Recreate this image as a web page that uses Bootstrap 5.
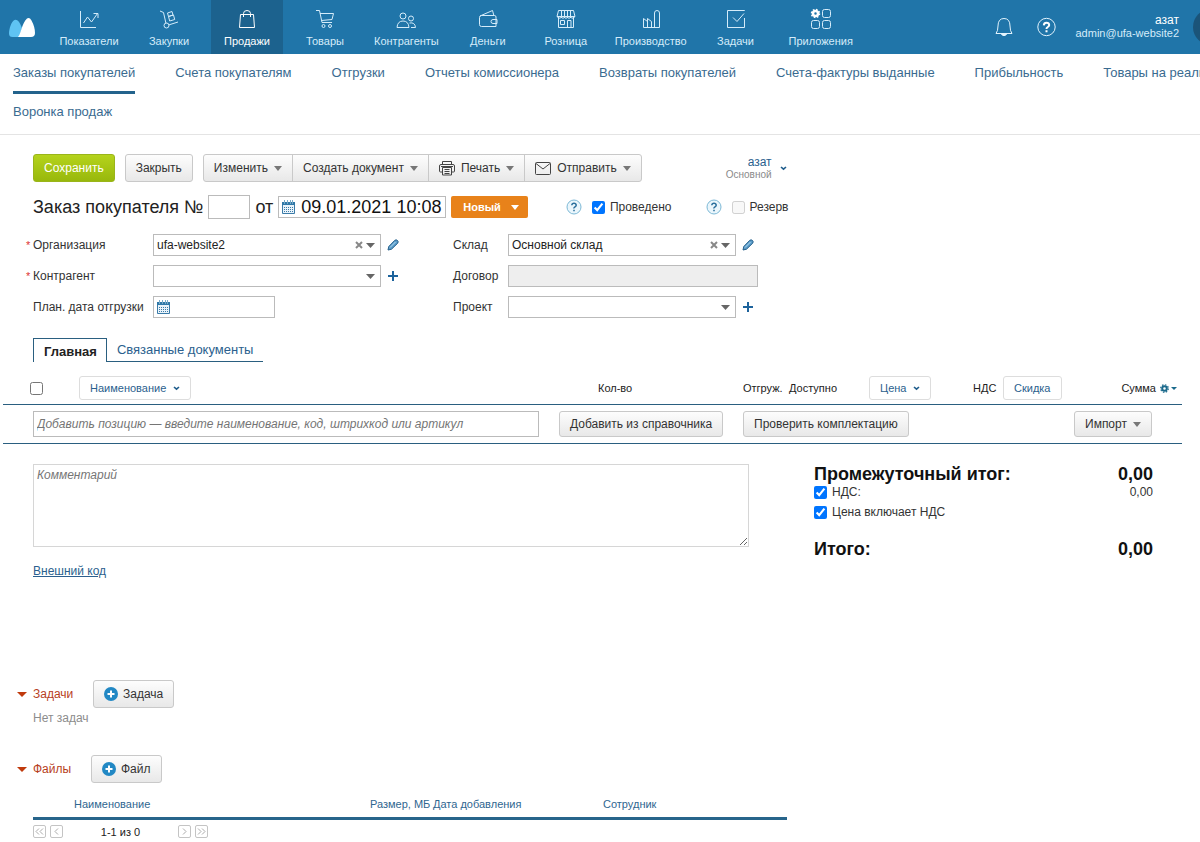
<!DOCTYPE html>
<html lang="ru">
<head>
<meta charset="utf-8">
<meta name="viewport" content="width=device-width, initial-scale=1">
<title>Заказ покупателя</title>
<link href="https://cdn.jsdelivr.net/npm/bootstrap@5.3.0/dist/css/bootstrap.min.css" rel="stylesheet">
<style>
:root{--ms-blue:#2075a9;--ms-link:#2b5f8e;--ms-line:#2a5f80}
body{font-family:"Liberation Sans",Arial,sans-serif;font-size:12px;line-height:16px;color:#222;background:#fff;overflow-x:hidden}
a{color:var(--ms-link);text-decoration:none}
label{white-space:nowrap}
input[type=checkbox]{width:13px;height:13px;margin:0;flex:none}
svg{flex:none;display:block}
/* top bar */
.topbar{background:var(--ms-blue);height:54px;overflow:hidden;padding-left:9px}
.brand{width:42px}
.mods{gap:6px}
.mod{min-width:72px;padding:8px 7px 0;color:#d5ecfa;font-size:11px;line-height:14px;gap:4px;white-space:nowrap}
.mod:first-child{min-width:76px}
.mod svg{fill:none;stroke:currentColor;stroke-width:1;height:22px;width:22px}
.mod.active{background:#1c628e;color:#fff}
.acct{color:#d5ecfa;font-size:11px;line-height:13px}
.acct strong{color:#fff;font-size:12px;font-weight:normal}
.avatar{width:36px;height:36px;border-radius:50%;background:#1b5479;margin-right:-29px;margin-left:14px}
.iconbtn{border:0;background:none;padding:0;color:#e2f3fd}
/* section links */
.sections{border-bottom:1px solid #e4e4e4;padding:1px 0 1px 13px;font-size:13px;overflow:hidden;white-space:nowrap}
.sections .line{gap:40px}
.sections a{line-height:36px;border-bottom:3px solid transparent;color:#3a6b90}
.sections a.active{border-color:#23638c}
/* controls */
.gbtn{--bs-btn-border-radius:3px;height:28px;padding:0 10px;font-size:12px;line-height:16px;border:1px solid #c9c9c9;background:linear-gradient(#fdfdfd,#e8e8e8);color:#333;display:inline-flex;align-items:center;white-space:nowrap;gap:6px}
.gbtn.low{height:26px}
.gbtn.save{background:linear-gradient(#b5d31c,#98b80c);border-color:#9ab51a;color:#fff}
.tri{width:0;height:0;border:4px solid transparent;border-top:5px solid #777;border-bottom:0}
.wbtn{height:24px;border:1px solid #ddd;border-radius:3px;background:#fff;color:var(--ms-link);font-size:11px;padding:0 10px;display:inline-flex;align-items:center;gap:7px}
.field{border:1px solid #bbb;height:22px;background:#fff;padding:0 3px;font-size:12px;color:#222;border-radius:0}
::placeholder{color:#757575;opacity:1;font-style:italic}
/* document head */
.doc{padding:19px 0 0 33px}
.tools{gap:10px}
.userpick{margin-left:74px;gap:8px}
.userpick .dept{font-size:10px;line-height:12px;color:#8a8a8a}
.userpick .who{line-height:13px}
.titlerow{font-size:18px;line-height:24px;margin-top:13px;color:#222;gap:5px}
.numbox{width:42px}
.titlerow .numbox{height:24px}
.titlerow .field{font-size:18px}
.datebox{display:flex;align-items:center;gap:5px;width:122px}
.titlerow .datebox{width:168px;gap:6px}
.datebox input{border:0;padding:0;outline:0;width:100%;background:none;color:#111}
.status{height:22px;background:#e8821a;color:#fff;border:0;border-radius:2px;font-size:11px;font-weight:bold;padding:0 9px 0 12px;gap:10px;display:flex;align-items:center}
.status .tri{border-top-color:#fff}
.checks{font-size:12px;line-height:16px;margin-left:33px;gap:5px;color:#333}
.checks svg{margin-right:5px}
.checks.second{margin-left:29px}
.props{display:grid;grid-template-columns:120px 300px 55px 300px;row-gap:9px;margin-top:15px;align-items:center}
.props label{position:relative;color:#333}
.req::before{content:"*";position:absolute;left:-7px;top:0;color:#d33;font-size:11px}
.combo{position:relative;width:228px}
.combo select{appearance:none;width:100%;display:block;background:#fff url("data:image/svg+xml,%3Csvg xmlns='http://www.w3.org/2000/svg' width='9' height='5'%3E%3Cpath d='M0 0h9L4.500 5z' fill='%23666'/%3E%3C/svg%3E") no-repeat right 5px center}
.contract{width:250px}
.contract:disabled{background:#eee}
.clear{position:absolute;right:18px;top:7px;border:0;background:none;padding:0}
.withact{display:flex;align-items:center;gap:6px}
.linktabs{margin-top:20px;font-size:13px;height:24px;width:230px}
.linktabs a{line-height:22px;padding:1px 9px 0 10px;border-bottom:1px solid var(--ms-line);white-space:nowrap;flex:1}
.linktabs a.active{flex:none;border:1px solid var(--ms-line);border-bottom:0;color:#222;font-weight:bold;line-height:24px}
/* positions */
.goods{margin:13px 18px 0 3px;font-size:11px}
.goods table{table-layout:fixed;width:100%}
.goods th{font-weight:normal;height:29px;padding:1px 0 4px;color:#222;white-space:nowrap;vertical-align:middle}
.goods tr{border-bottom:1px solid var(--ms-line)}
.goods td{height:39px;padding:0}
.goods th.selcol{padding:0 0 3px 27px}
.goods th.qty{padding-left:39px}
.goods td.additem-cell{padding:0 20px 0 30px}
.additem{height:26px}
.sumcol{gap:4px;padding-right:5px}
/* comment and totals */
.totals{padding:20px 47px 0 33px}
.noteside{width:716px}
.note{display:block;width:100%;height:83px;border:1px solid #d6d6d6;padding:2px 3px;font-size:12px;line-height:16px}
.sums{width:339px}
.sumhead{font-size:18px;line-height:20px;font-weight:bold;color:#111}
.sumline{gap:5px;color:#333}
.grand{margin-top:19px}
/* tasks and files */
.extras{padding:101px 0 0 17px}
.blk{color:#b7401d;gap:6px;width:76px}
.blk .tri{border-width:5px;border-top-color:#c03a0d;border-bottom:0}
.addbtn{gap:5px}
.none{padding:2px 0 0 16px;color:#8c8c8c}
.filehead{margin-top:29px}
.filehead .blk{width:74px}
.filelist{padding:11px 0 4px 16px}
.files{width:754px;font-size:11px;table-layout:fixed}
.files th{font-weight:normal;color:#2f6690;height:24px;padding:0 0 3px;white-space:nowrap;border-bottom:3px solid #28658b}
.pager{gap:4px;font-size:11px;margin-top:4px}
.count{width:107px;text-align:center}
.pg{width:13px;height:13px;border:1px solid #c4c4c4;border-radius:2px;background:#fff;padding:0;display:flex;align-items:center;justify-content:center}
.pg svg{stroke:#aaa;fill:none}
</style>
</head>
<body>
<svg class="d-none" aria-hidden="true">
 <symbol id="cal" viewBox="0 0 13 14"><path d="M.5 2.500h12v11H.5z" fill="#e9f3fa" stroke="#3a7ba8"/><path d="M0 2h13v3H0z" fill="#2f78a8"/><path d="M2.500 0v4M5.500 0v4M8.500 0v4M10.500 0v4" stroke="#79abc9"/><path d="M2 7.500h9M2 9.500h9M2 11.500h9" stroke="#3a7ba8" stroke-dasharray="1 1"/></symbol>
 <symbol id="pen" viewBox="0 0 12 12"><path d="M1 11l.8-3.500L7.800 1.300Q9.200.3 10.500 1.500T10.700 4.200L4.500 10.200z" fill="#5b9cc9" stroke="#245f8a"/><path d="M3 8.500l5.500-5.500" stroke="#b4dcf2"/></symbol>
 <symbol id="plus" viewBox="0 0 12 12"><path d="M6 1v10M1 6h10" stroke="#1d639c" stroke-width="2"/></symbol>
 <symbol id="x" viewBox="0 0 8 8"><path d="M1 1l6 6M7 1L1 7" stroke="#888" stroke-width="2"/></symbol>
 <symbol id="chev" viewBox="0 0 7 5"><path d="M1 1l2.500 2.200L6 1" fill="none" stroke="#1f5d8c" stroke-width="1.600"/></symbol>
 <symbol id="help" viewBox="0 0 16 16"><circle cx="8" cy="8" r="7" fill="#eaf6fc" stroke="#7db9d6"/><path d="M5.800 6.300Q6 4.300 8 4.300T10.200 6.200Q10.200 7.200 9 7.900T8 9.500M8 10.700v1.500" fill="none" stroke="#2a6f9c" stroke-width="1.500"/></symbol>
 <symbol id="add" viewBox="0 0 14 14"><circle cx="7" cy="7" r="7" fill="#2288c4"/><path d="M7 3.500v7M3.500 7h7" stroke="#fff" stroke-width="2"/></symbol>
</svg>

<header class="topbar d-flex align-items-stretch">
 <a class="brand d-flex align-items-center" href="#" aria-label="Главная страница"><svg width="27" height="21" viewBox="0 0 27 21"><path d="M5.500 3C2.500 4 0 12 0 16.500Q0 20 3.500 20H10L13 11Q9.500 1.500 5.500 3z" fill="#5fc3f3"/><path d="M9 20C11.500 18 13 6 18 1.500Q20.500 0 22.500 3.500Q26 10 26 16Q26 20 22 20z" fill="#fff"/></svg></a>
 <nav class="mods d-flex">
  <a class="mod d-flex flex-column align-items-center" href="#"><svg viewBox="0 0 22 22"><path d="M2.500 3v16.500H18M5.500 15l4-6 4 5 6-8.500M15.500 5.500H20V10"/></svg>Показатели</a>
  <a class="mod d-flex flex-column align-items-center" href="#"><svg viewBox="0 0 22 22"><path d="M2 3l3.500 1.500L8 15.500M10.500 17l9.500-3M9.500 5l4.500-1.500 1 3.500-4.500 1.500zM10.500 8.500l5-1.500 1.200 4.500-5 1.500z"/><circle cx="8.500" cy="17.500" r="2.500"/></svg>Закупки</a>
  <a class="mod active d-flex flex-column align-items-center" href="#"><svg viewBox="0 0 22 22"><path d="M4.500 6.500h13l1 13h-15zM7.500 9V5.500Q7.500 2.500 11 2.500T14.500 5.500V9"/></svg>Продажи</a>
  <a class="mod d-flex flex-column align-items-center" href="#"><svg viewBox="0 0 22 22"><path d="M2 2.500h3.500L8 14.500h10M6 5.500h13.500l-1.500 6L7.500 12.500"/><circle cx="9.500" cy="18" r="1.500"/><circle cx="16" cy="18" r="1.500"/></svg>Товары</a>
  <a class="mod d-flex flex-column align-items-center" href="#"><svg viewBox="0 0 22 22"><circle cx="8" cy="8" r="3"/><circle cx="16" cy="10.500" r="2.500"/><path d="M2 19.500Q2.500 13 8 13t6 6.500zM14.500 15Q20 14 20.500 19.500H16"/></svg>Контрагенты</a>
  <a class="mod d-flex flex-column align-items-center" href="#"><svg viewBox="0 0 22 22"><path d="M3 8L15.500 2.500 17 8M4.500 7.500h13Q19 7.500 19 9v9.500H4.500Q2.500 18.500 2.500 16.500V9.500Q2.500 7.500 4.500 7.500zM20 11.500h-4q-2 0-2 2t2 2h4z"/></svg>Деньги</a>
  <a class="mod d-flex flex-column align-items-center" href="#"><svg viewBox="0 0 22 22"><path d="M3.500 2.500h15l1.500 6H2zM3.500 8.500v11h15v-11M6.500 3v7M9.500 3v7M12.500 3v7M15.500 3v7M2 8.500q1.500 3 4.500 1 1.500 1.500 3 0 1.500 1.500 3 0 1.500 1.500 3 0 3 2 4.500-1M5.500 12.500h4v4h-4zM12.500 19.500v-7h3.500v7"/></svg>Розница</a>
  <a class="mod d-flex flex-column align-items-center" href="#"><svg viewBox="0 0 22 22"><path d="M3.500 19.500v-9l4 3v-3l4 3v6M3.500 19.500h16V5Q19.500 2.500 17 2.500T14.500 5v14.500M7.500 13v6.500"/></svg>Производство</a>
  <a class="mod d-flex flex-column align-items-center" href="#"><svg viewBox="0 0 22 22"><path d="M19.500 3V2.500h-17v17h17V10M8 9.500l4 4 7-8"/></svg>Задачи</a>
  <a class="mod ms-1 d-flex flex-column align-items-center" href="#"><svg viewBox="0 0 22 22"><rect x="12.500" y="1.500" width="8" height="8" rx="2"/><rect x="1.500" y="12.500" width="8" height="8" rx="2"/><rect x="12.500" y="12.500" width="8" height="8" rx="2"/><circle cx="5.500" cy="5.500" r="2.500" stroke="#fff" stroke-width="2.500"/><circle cx="5.500" cy="5.500" r="4" stroke="#fff" stroke-width="1.500" stroke-dasharray="1.600 1.540"/></svg>Приложения</a>
 </nav>
 <div class="ms-auto d-flex align-items-center">
  <button class="iconbtn" aria-label="Уведомления"><svg width="18" height="20" viewBox="0 0 18 20" fill="none" stroke="currentColor"><path d="M1 16.500Q3 14 3 9 3 1.500 9 1.500T15 9q0 5 2 7.500z"/><path d="M6.500 17.500Q9 20 11.500 17.500z" fill="currentColor"/></svg></button>
  <button class="iconbtn ms-4" aria-label="Помощь"><svg width="19" height="20" viewBox="0 0 19 20"><circle cx="9.500" cy="10" r="8.700" fill="none" stroke="currentColor"/><path d="M6.800 8.300Q7 5.800 9.500 5.800T12.200 8Q12.200 9.200 10.800 10T9.500 12M9.500 13.200v2" fill="none" stroke="#fff" stroke-width="2"/></svg></button>
  <div class="acct d-flex flex-column align-items-end ms-3 ps-1"><strong>азат</strong><span>admin@ufa-website2</span></div>
  <div class="avatar"></div>
 </div>
</header>

<nav class="sections">
 <div class="line d-flex"><a class="active" href="#">Заказы покупателей</a><a href="#">Счета покупателям</a><a href="#">Отгрузки</a><a href="#">Отчеты комиссионера</a><a href="#">Возвраты покупателей</a><a href="#">Счета-фактуры выданные</a><a href="#">Прибыльность</a><a href="#">Товары на реализации</a></div>
 <div class="line d-flex"><a href="#">Воронка продаж</a></div>
</nav>

<main>
<section class="doc">
 <div class="tools d-flex align-items-center">
  <button class="btn gbtn save">Сохранить</button>
  <button class="btn gbtn">Закрыть</button>
  <div class="btn-group">
   <button class="btn gbtn">Изменить <span class="tri"></span></button>
   <button class="btn gbtn">Создать документ <span class="tri"></span></button>
   <button class="btn gbtn"><svg width="16" height="16" viewBox="0 0 16 16" fill="none" stroke="#444"><path d="M3.500 4V1.500h9V4M3.500 12h-2Q.5 12 .5 11V6Q.5 4.500 2 4.500h12q1.500 0 1.500 1.500v5q0 1-1 1h-2M3.500 7.500h9v7.500h-9zM5.500 9.500h5M5.500 11.500h5M5.500 13.500h5M2 6.500h12"/></svg>Печать <span class="tri"></span></button>
   <button class="btn gbtn"><svg width="16" height="13" viewBox="0 0 16 13" fill="none" stroke="#444"><rect x=".5" y=".5" width="15" height="12" rx="1"/><path d="M1 1.500l7 5.500 7-5.500"/></svg>Отправить <span class="tri"></span></button>
  </div>
  <a href="#" class="userpick d-flex align-items-center"><span class="d-flex flex-column align-items-end"><span class="who">азат</span><span class="dept">Основной</span></span><svg width="7" height="5"><use href="#chev"/></svg></a>
 </div>

 <div class="titlerow d-flex align-items-center">
  <label for="num">Заказ покупателя №</label>
  <input id="num" class="field numbox">
  <label for="dt">от</label>
  <div class="field datebox"><svg width="13" height="14"><use href="#cal"/></svg><input id="dt" value="09.01.2021 10:08"></div>
  <button class="status">Новый <span class="tri"></span></button>
  <div class="d-flex align-items-center checks"><svg width="16" height="16"><use href="#help"/></svg><input type="checkbox" id="done" checked><label for="done">Проведено</label></div>
  <div class="d-flex align-items-center checks second"><svg width="16" height="16"><use href="#help"/></svg><input type="checkbox" id="res" disabled><label for="res">Резерв</label></div>
 </div>

 <div class="props">
  <label class="req" for="org">Организация</label>
  <div class="withact"><div class="combo"><select id="org" class="field"><option>ufa-website2</option></select><button class="clear" aria-label="Очистить"><svg width="8" height="8"><use href="#x"/></svg></button></div><button class="iconbtn" aria-label="Изменить"><svg width="12" height="12"><use href="#pen"/></svg></button></div>
  <label for="store">Склад</label>
  <div class="withact"><div class="combo"><select id="store" class="field"><option>Основной склад</option></select><button class="clear" aria-label="Очистить"><svg width="8" height="8"><use href="#x"/></svg></button></div><button class="iconbtn" aria-label="Изменить"><svg width="12" height="12"><use href="#pen"/></svg></button></div>
  <label class="req" for="agent">Контрагент</label>
  <div class="withact"><div class="combo"><select id="agent" class="field"><option></option></select></div><button class="iconbtn" aria-label="Добавить"><svg width="12" height="12"><use href="#plus"/></svg></button></div>
  <label for="contract">Договор</label>
  <input id="contract" class="field contract" disabled>
  <label for="plan">План. дата отгрузки</label>
  <div class="field datebox"><svg width="13" height="14"><use href="#cal"/></svg><input id="plan"></div>
  <label for="project">Проект</label>
  <div class="withact"><div class="combo"><select id="project" class="field"><option></option></select></div><button class="iconbtn" aria-label="Добавить"><svg width="12" height="12"><use href="#plus"/></svg></button></div>
 </div>

 <div class="linktabs d-flex"><a class="active" href="#">Главная</a><a href="#">Связанные документы</a></div>
</section>

<div class="goods">
 <table>
  <colgroup><col style="width:76px"><col><col style="width:184px"><col style="width:46px"><col style="width:80px"><col style="width:104px"><col style="width:30px"><col style="width:71px"><col style="width:108px"></colgroup>
  <thead><tr>
   <th class="selcol"><input type="checkbox" aria-label="Выбрать все" class="d-block"></th>
   <th><button class="wbtn">Наименование <svg width="7" height="5"><use href="#chev"/></svg></button></th>
   <th class="qty">Кол-во</th><th>Отгруж.</th><th>Доступно</th>
   <th><button class="wbtn">Цена <svg width="7" height="5"><use href="#chev"/></svg></button></th>
   <th>НДС</th><th><button class="wbtn">Скидка</button></th>
   <th><div class="d-flex align-items-center justify-content-end sumcol">Сумма <svg width="17" height="9" viewBox="0 0 17 9"><circle cx="4.500" cy="4.500" r="2.300" fill="none" stroke="#1b6a8c" stroke-width="2"/><circle cx="4.500" cy="4.500" r="3.800" fill="none" stroke="#1b6a8c" stroke-width="1.200" stroke-dasharray="1.500 1.480"/><path d="M11 3h6l-3 3z" fill="#1b6a8c"/></svg></div></th>
  </tr></thead>
  <tbody><tr>
   <td colspan="2" class="additem-cell"><input class="field additem w-100 d-block" aria-label="Добавить позицию" placeholder="Добавить позицию — введите наименование, код, штрихкод или артикул"></td>
   <td><button class="btn gbtn low">Добавить из справочника</button></td>
   <td colspan="5"><button class="btn gbtn low">Проверить комплектацию</button></td>
   <td><button class="btn gbtn low">Импорт <span class="tri"></span></button></td>
  </tr></tbody>
 </table>
</div>

<section class="d-flex justify-content-between totals">
 <div class="noteside">
  <textarea class="note" aria-label="Комментарий" placeholder="Комментарий"></textarea>
  <a href="#" class="d-inline-block text-decoration-underline mt-3">Внешний код</a>
 </div>
 <div class="sums">
  <div class="d-flex justify-content-between sumhead"><span>Промежуточный итог:</span><span>0,00</span></div>
  <div class="d-flex align-items-center sumline"><input type="checkbox" id="vat" checked><label for="vat">НДС:</label><span class="ms-auto">0,00</span></div>
  <div class="d-flex align-items-center sumline mt-1"><input type="checkbox" id="incl" checked><label for="incl">Цена включает НДС</label></div>
  <div class="d-flex justify-content-between sumhead grand"><span>Итого:</span><span>0,00</span></div>
 </div>
</section>

<section class="extras">
 <div class="d-flex align-items-center"><div class="blk d-flex align-items-center"><span class="tri"></span>Задачи</div><button class="btn gbtn addbtn"><svg width="14" height="14"><use href="#add"/></svg>Задача</button></div>
 <div class="none">Нет задач</div>
 <div class="d-flex align-items-center filehead"><div class="blk d-flex align-items-center"><span class="tri"></span>Файлы</div><button class="btn gbtn addbtn"><svg width="14" height="14"><use href="#add"/></svg>Файл</button></div>
 <div class="filelist">
  <table class="files">
   <colgroup><col style="width:41px"><col style="width:296px"><col style="width:63px"><col style="width:170px"><col></colgroup>
   <thead><tr><th></th><th>Наименование</th><th>Размер, МБ</th><th>Дата добавления</th><th>Сотрудник</th></tr></thead>
  </table>
  <div class="d-flex align-items-center pager">
   <button class="pg" aria-label="В начало"><svg width="9" height="7"><path d="M4 .5l-3 3 3 3M8 .5l-3 3 3 3"/></svg></button>
   <button class="pg" aria-label="Назад"><svg width="5" height="7"><path d="M4 .5l-3 3 3 3"/></svg></button>
   <span class="count">1-1 из 0</span>
   <button class="pg" aria-label="Вперед"><svg width="5" height="7"><path d="M1 .5l3 3-3 3"/></svg></button>
   <button class="pg" aria-label="В конец"><svg width="9" height="7"><path d="M1 .5l3 3-3 3M5 .5l3 3-3 3"/></svg></button>
  </div>
 </div>
</section>
</main>
<script src="https://cdn.jsdelivr.net/npm/bootstrap@5.3.0/dist/js/bootstrap.bundle.min.js"></script>
</body>
</html>
